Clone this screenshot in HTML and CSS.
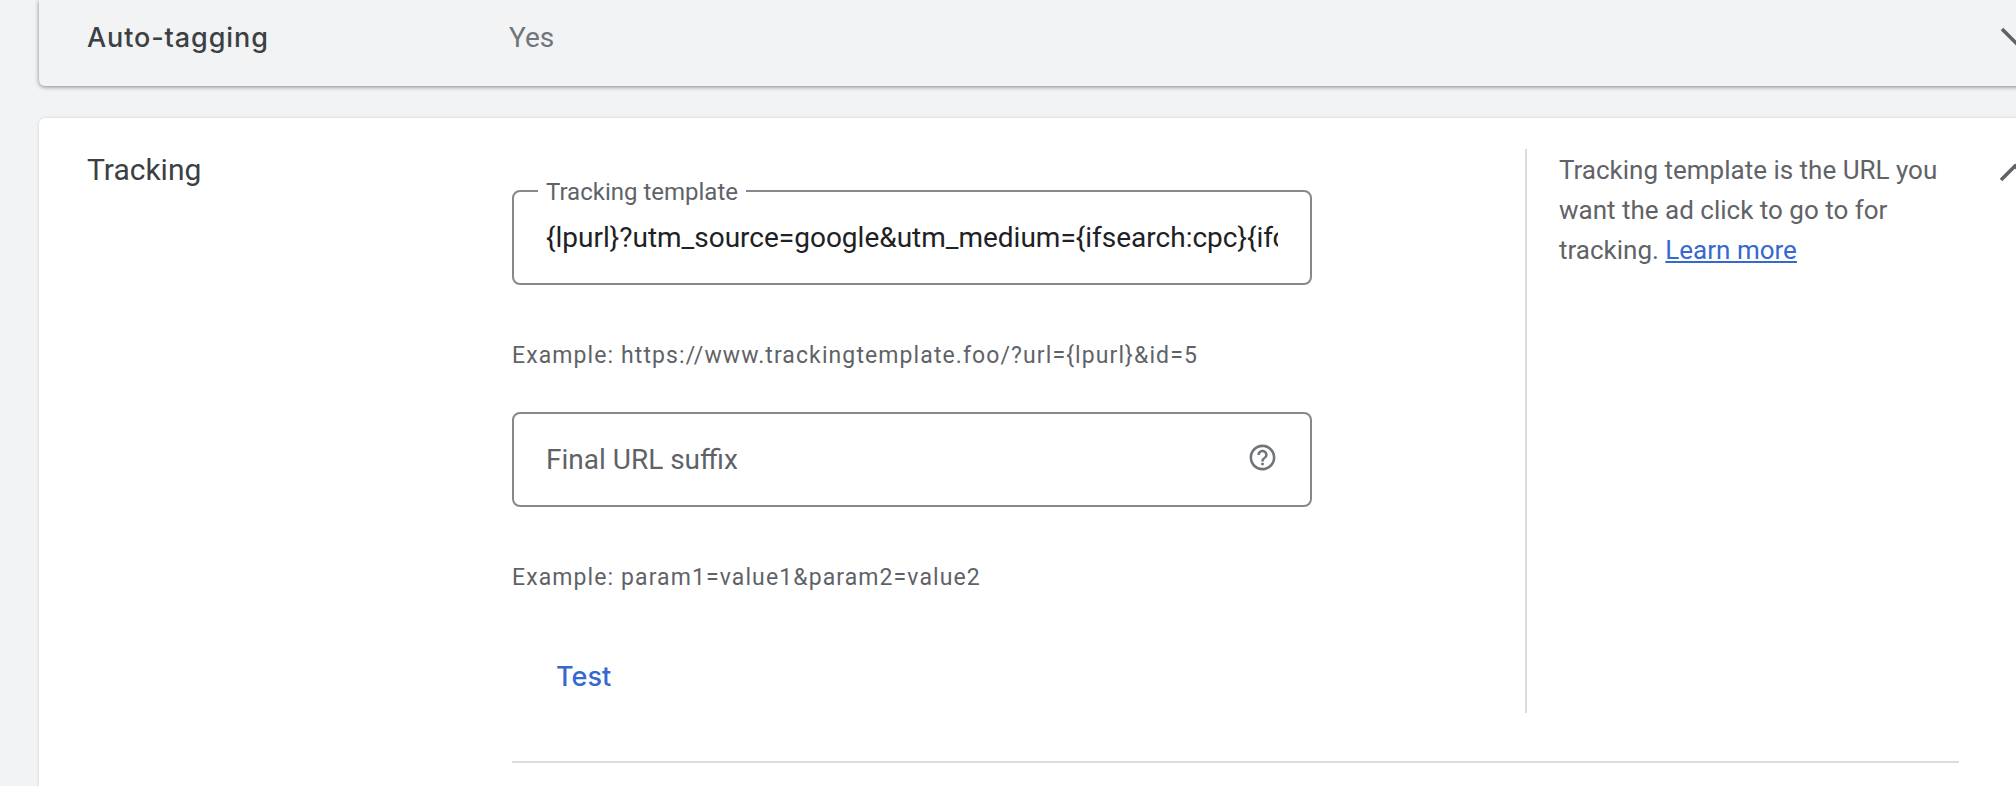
FILE: index.html
```html
<!DOCTYPE html>
<html lang="en">
<head>
  <meta charset="UTF-8">
  <title>Campaign settings</title>
  <link rel="stylesheet" href="styles.css">
</head>
<body>

  <!-- Auto-tagging (collapsed) -->
  <div class="card card-collapsed">
    <div class="card-title-bold">Auto-tagging</div>
    <div class="summary">Yes</div>
    <svg class="chevron chevron-down" viewBox="0 0 32 20"><polyline points="2,2 16,16 30,2"/></svg>
  </div>

  <!-- Tracking (open) -->
  <div class="card card-open">
    <div class="card-title">Tracking</div>
    <div class="card-main">
      <div class="edit-row">
        <div class="form">
          <div class="field field-filled">
            <span class="field-label">Tracking template</span>
            <div class="field-value">{lpurl}?utm_source=google&amp;utm_medium={ifsearch:cpc}{ifcontent:display}</div>
          </div>
          <p class="example">Example: https://www.trackingtemplate.foo/?url={lpurl}&amp;id=5</p>
          <div class="field">
            <div class="field-placeholder">Final URL suffix</div>
            <svg class="help-icon" viewBox="0 0 24 24"><path d="M11 18h2v-2h-2v2zm1-16C6.48 2 2 6.48 2 12s4.48 10 10 10 10-4.48 10-10S17.52 2 12 2zm0 18c-4.41 0-8-3.59-8-8s3.59-8 8-8 8 3.59 8 8-3.59 8-8 8zm0-14c-2.21 0-4 1.79-4 4h2c0-1.1.9-2 2-2s2 .9 2 2c0 2-3 1.75-3 5h2c0-2.25 3-2.5 3-5 0-2.21-1.79-4-4-4z"/></svg>
          </div>
          <p class="example">Example: param1=value1&amp;param2=value2</p>
          <a class="test-btn" href="#">Test</a>
        </div>
        <div class="help">
          Tracking template is the URL you want the ad click to go to for tracking. <a href="#">Learn more</a>
        </div>
      </div>
      <div class="divider"></div>
    </div>
    <svg class="chevron chevron-up" viewBox="0 0 32 20"><polyline points="2,18 16,4 30,18"/></svg>
  </div>

</body>
</html>
```

FILE: styles.css
```css
/* page */
html, body {
  margin: 0;
  padding: 0;
  height: 786px;
  overflow: hidden;
  background-color: #f1f3f4;
}

body {
  font-family: Roboto, "Liberation Sans", sans-serif;
  padding-left: 39px;
}

/* cards */
.card {
  display: flex;
  width: 2040px;
  padding: 0 0 0 48px;
  box-sizing: border-box;
}

.card-collapsed {
  height: 86px;
  padding-bottom: 12px;
  align-items: center;
  background-color: #f1f3f4;
  border-radius: 0 0 6px 6px;
  box-shadow: 0 1px 4px rgba(60, 64, 67, 0.6);
}

.card-open {
  height: 700px;
  margin-top: 32px;
  padding-top: 31px;
  background-color: #fff;
  border-radius: 6px 6px 0 0;
  box-shadow: 0 0 3px rgba(60, 64, 67, 0.2);
}

.card-title-bold {
  width: 425px;
  font-family: Inter, Roboto, sans-serif;
  font-size: 27px;
  font-weight: 500;
  letter-spacing: 0.9px;
  color: #3c4043;
}

.summary {
  width: 1488px;
  margin-left: -3px;
  margin-right: 3px;
  font-size: 28px;
  color: #70757a;
}

.card-title {
  width: 425px;
  font-size: 30px;
  line-height: 42px;
  color: #3c4043;
}

.card-main {
  width: 1447px;
  flex-shrink: 0;
}

/* chevrons run off the right edge */
.chevron {
  width: 32px;
  height: 20px;
  flex-shrink: 0;
  fill: none;
  stroke: #5f6368;
  stroke-width: 3.6;
}

.chevron-up {
  margin: 13px 0 0 40px;
}

/* form + help */
.edit-row {
  display: flex;
  height: 564px;
}

.form {
  width: 1013px;
  padding-top: 41px;
  box-sizing: border-box;
}

.field {
  position: relative;
  width: 800px;
  height: 95px;
  padding: 0 32px;
  box-sizing: border-box;
  display: flex;
  align-items: center;
  justify-content: space-between;
  border: 2px solid #85888c;
  border-radius: 8px;
}

.field-label {
  position: absolute;
  left: 24px;
  top: -13px;
  padding: 0 8px;
  background-color: #fff;
  font-size: 24px;
  line-height: 26px;
  color: #5f6368;
}

.field-value {
  width: 733px;
  overflow: hidden;
  white-space: nowrap;
  font-size: 28px;
  color: #202124;
}

.field-placeholder {
  font-size: 28px;
  color: #5f6368;
}

.help-icon {
  width: 31px;
  height: 31px;
  margin: -5px 0 0 0;
  fill: #70757a;
}

.example {
  margin: 57px 0 42px;
  font-size: 23px;
  line-height: 28px;
  letter-spacing: 1.1px;
  color: #5f6368;
}

.form .example:last-of-type {
  margin-bottom: 57px;
}

.test-btn {
  display: inline-block;
  padding: 0 44px;
  font-family: Inter, Roboto, sans-serif;
  font-size: 27px;
  font-weight: 500;
  line-height: 56px;
  color: #3569cf;
  text-decoration: none;
}

.help {
  flex: 1;
  padding: 1px 16px 0 32px;
  border-left: 2px solid #dadce0;
  font-size: 26px;
  line-height: 40px;
  color: #5f6368;
}

.help a {
  color: #3569cf;
}

.divider {
  height: 2px;
  margin-top: 48px;
  background-color: #dadce0;
}
```
